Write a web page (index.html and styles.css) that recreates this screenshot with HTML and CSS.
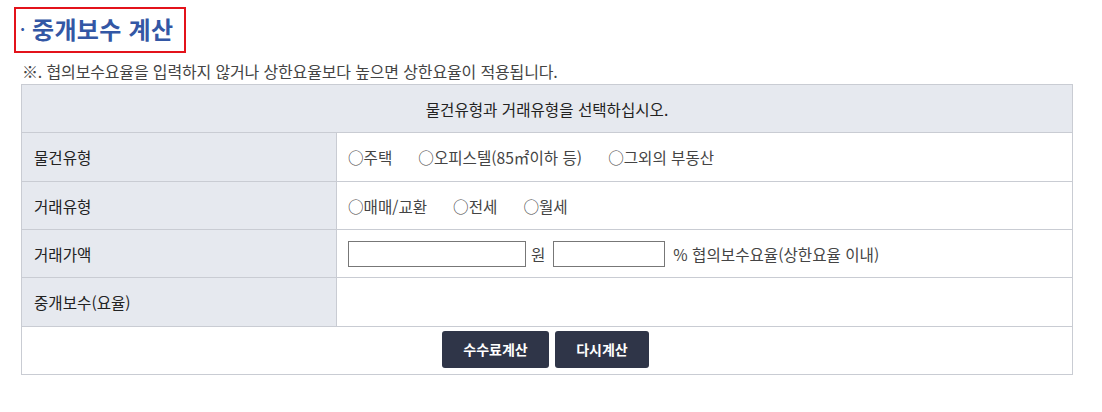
FILE: index.html
```html
<!DOCTYPE html>
<html lang="ko">
<head>
<meta charset="utf-8">
<link rel="stylesheet" href="styles.css">
</head>
<body>
<div class="page">
  <h2 class="title"><span class="dot">·</span>중개보수 계산</h2>
  <p class="note">※. 협의보수요율을 입력하지 않거나 상한요율보다 높으면 상한요율이 적용됩니다.</p>
  <table class="calc">
    <tr class="r48"><th colspan="2" class="head">물건유형과 거래유형을 선택하십시오.</th></tr>
    <tr class="r49">
      <td class="label">물건유형</td>
      <td class="value"><span class="opt">○주택</span><span class="opt">○오피스텔(85㎡이하 등)</span><span class="opt">○그외의 부동산</span></td>
    </tr>
    <tr class="r48">
      <td class="label">거래유형</td>
      <td class="value"><span class="opt">○매매/교환</span><span class="opt">○전세</span><span class="opt">○월세</span></td>
    </tr>
    <tr class="r48">
      <td class="label">거래가액</td>
      <td class="value"><div class="inline"><input class="in-amount" type="text"><span class="won">원</span><input class="in-rate" type="text"><span class="pct">% 협의보수요율(상한요율 이내)</span></div></td>
    </tr>
    <tr class="r49">
      <td class="label">중개보수(요율)</td>
      <td class="value"></td>
    </tr>
    <tr class="r48">
      <td colspan="2" class="actions"><div class="btns"><button class="btn btn-calc">수수료계산</button><button class="btn btn-reset">다시계산</button></div></td>
    </tr>
  </table>
</div>
</body>
</html>
```
FILE: styles.css
```css
* { box-sizing: border-box; }
body {
  margin: 0;
  background: #fff;
  font-family: "Noto Sans CJK KR", "Noto Sans", sans-serif;
  color: #333;
}
.page {
  padding: 7px 29px 0 21px;
}
.title {
  display: inline-block;
  margin: 0 0 0 -7px;
  height: 46px;
  width: 172px;
  padding: 0 0 0 4px;
  border: 2px solid #e3131b;
  font-size: 24px;
  font-weight: 700;
  line-height: 40px;
  color: #3357a5;
  letter-spacing: 0.3px;
  white-space: nowrap;
}
.dot {
  display: inline-block;
  width: 12px;
  font-size: 16px;
  vertical-align: 3px;
}
.note {
  margin: 6px 0 0 1px;
  font-size: 16px;
  line-height: 24px;
  height: 25px;
  color: #444;
  letter-spacing: -0.15px;
}
.calc {
  width: 1052px;
  border-collapse: collapse;
  font-size: 15.6px;
}
.calc th, .calc td {
  border: 1px solid #c9ccd3;
  padding: 0;
}
.r48 > th, .r48 > td { height: 48px; }
.r49 > th, .r49 > td { height: 49px; }
.head {
  background: #e6e9ef;
  font-weight: 400;
  text-align: center;
  color: #222;
}
.label {
  width: 315px;
  background: #e6e9ef;
  padding-left: 12px !important;
  color: #222;
}
.value {
  padding-left: 11px !important;
  color: #444;
}
.opt { margin-right: 26px; }
.inline {
  display: flex;
  align-items: center;
}
.inline input {
  height: 26px;
  border: 1px solid #777;
  margin: 0;
  padding: 0 4px;
}
.in-amount { width: 178px; }
.won { margin-left: 5px; }
.in-rate { width: 112px; margin-left: 8px !important; }
.pct { margin-left: 8px; }
.actions { text-align: center; }
.btns {
  display: flex;
  justify-content: center;
  gap: 6px;
  padding-right: 3px;
  padding-bottom: 3px;
}
.btn {
  height: 37px;
  border: 0;
  border-radius: 3px;
  background: #2f3548;
  color: #fff;
  font-family: inherit;
  font-size: 14px;
  font-weight: 700;
  padding: 0;
}
.btn-calc { width: 107px; }
.btn-reset { width: 94px; }
```
